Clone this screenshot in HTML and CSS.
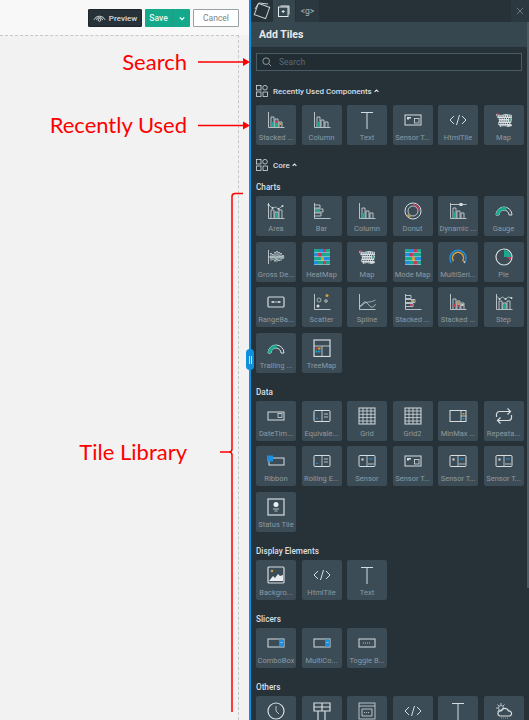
FILE: index.html
```html
<!DOCTYPE html>
<html lang="en">

<head>
    <meta charset="UTF-8">
    <meta name="viewport" content="width=device-width, initial-scale=1.0">
    <title>Add Tiles</title>
    <link rel="stylesheet" href="styles.css">
</head>

<body>

    <svg class="sprites" width="0" height="0">
        <defs>
            <!-- shared chart axis -->
            <path id="axis" d="M1.5 1v15.5H17.5" />

            <symbol id="i-stacked" viewBox="0 0 18 18">
                <use href="#axis" class="ln" />
                <path class="ln" d="M4 16V6h3v10M8 16V8h3v8M12 16v-5h3v5" />
                <rect x="4.5" y="11" width="2" height="5" class="teal" />
                <rect x="8.5" y="12" width="2" height="4" class="teal" />
                <rect x="8.5" y="9.5" width="2" height="2.5" class="red" />
                <rect x="12.5" y="12" width="2" height="2" class="gold" />
            </symbol>
            <symbol id="i-column" viewBox="0 0 18 18">
                <use href="#axis" class="ln" />
                <path class="ln" d="M4 16V6h3v10M8 16V9h3v7M12 16v-5h3v5" />
                <rect x="4.5" y="11" width="2" height="5" class="teal" />
            </symbol>
            <symbol id="i-text" viewBox="0 0 18 18">
                <path class="ln-b" d="M3 1.5h12M9 1.5V18" />
            </symbol>
            <symbol id="i-sensort" viewBox="0 0 18 18">
                <rect x="1" y="4" width="16" height="10" class="ln-b" />
                <path class="fill-l" d="M3 6h4v1.5H5v1H3z" />
                <rect x="10.5" y="7.5" width="4.5" height="4.5" class="ln" />
            </symbol>
            <symbol id="i-html" viewBox="0 0 18 18">
                <path class="ln-b" d="M5 5L1 9l4 4M13 5l4 4-4 4M10.5 4l-3 10" />
            </symbol>
            <symbol id="i-map" viewBox="0 0 18 18">
                <path class="fill-l" d="M1 3l5 1 5-1 6 1v4l-1 4 1 3-4 1-4-1-4 1-2-3 1-4-2-3z" />
                <path class="ln-hole" d="M2 5h15M1 7.500h16M3 10h13M2 12.500h15M4 15h9" />
                <circle cx="3" cy="3" r="1" class="red" />
                <circle cx="15" cy="9" r="1" class="teal" />
            </symbol>
            <symbol id="i-area" viewBox="0 0 18 18">
                <use href="#axis" class="ln" />
                <path class="ln" d="M4 16V8h3v8M8 16v-6h3v6M12 16v-8h3v8" />
                <rect x="8.5" y="11" width="2" height="5" class="teal" />
                <path class="ln-t" d="M1.5 3l4 3 3-1 3 2 4-3" />
                <circle cx="1.5" cy="3" r="1" class="fill-l" />
                <circle cx="5.5" cy="6" r="1" class="fill-l" />
                <circle cx="11.5" cy="7" r="1" class="fill-l" />
                <circle cx="15.5" cy="4" r="1" class="fill-l" />
            </symbol>
            <symbol id="i-bar" viewBox="0 0 18 18">
                <use href="#axis" class="ln" />
                <path class="ln" d="M1.5 3H7v3H1.5M1.5 7H10v3H1.5M1.5 11H8v3H1.5" />
                <rect x="2" y="7.5" width="5" height="2" class="teal" />
            </symbol>
            <symbol id="i-donut" viewBox="0 0 18 18">
                <circle cx="9" cy="9" r="8" class="ln-b" />
                <circle cx="9" cy="9" r="5" class="ln" />
                <path class="ln-r" d="M9 2.5a6.500 6.500 0 0 1 6.5 6.5" />
                <path class="ln-g" d="M3.5 12.5a6.500 6.500 0 0 0 3 2.5" />
            </symbol>
            <symbol id="i-dynamic" viewBox="0 0 18 18">
                <use href="#axis" class="ln" />
                <path class="ln" d="M4 16V6h3v10M8 16V9h3v7M12 16v-5h3v5" />
                <rect x="4.5" y="10" width="2" height="6" class="teal" />
                <path class="ln" d="M1.5 2.5H17.5" />
                <rect x="10.5" y="1" width="3" height="3" class="fill-l" />
            </symbol>
            <symbol id="i-gauge" viewBox="0 0 18 18">
                <path class="ln-b" d="M1 13a8 8 0 0 1 16 0h-3a5 5 0 0 0-10 0z" />
                <path class="teal" d="M1 13a8 8 0 0 1 11-7.400l-1 2.800a5 5 0 0 0-7 4.600z" />
            </symbol>
            <symbol id="i-gross" viewBox="0 0 18 18">
                <path class="ln" d="M1.5 2v14M1 9h16.5" />
                <path class="ln-d" d="M4 5v8M6 6v6M8 4v10M10 3v11M12 4v9M14 5v8M16 7v4" />
                <path class="ln-t" d="M3 10l3-2 3 3 4-3 3 1" />
            </symbol>
            <symbol id="i-heatmap" viewBox="0 0 18 18">
                <rect x="1" y="1" width="16" height="16" class="fill-l" />
                <rect x="1" y="1" width="5" height="3.5" class="teal" />
                <rect x="6" y="1" width="4" height="3.5" class="blue" />
                <rect x="10" y="1" width="3" height="3.5" class="red" />
                <rect x="13" y="1" width="4" height="3.5" class="teal" />
                <rect x="1" y="5" width="4" height="3.5" class="blue" />
                <rect x="5" y="5" width="4" height="3.5" class="red" />
                <rect x="9" y="5" width="8" height="3.5" class="teal" />
                <rect x="1" y="9" width="7" height="3.5" class="teal" />
                <rect x="8" y="9" width="3" height="3.5" class="gold" />
                <rect x="11" y="9" width="6" height="3.5" class="blue" />
                <rect x="1" y="13" width="4" height="3.5" class="blue" />
                <rect x="5" y="13" width="5" height="3.5" class="teal" />
                <rect x="10" y="13" width="3" height="3.5" class="red" />
                <rect x="13" y="13" width="4" height="3.5" class="teal" />
            </symbol>
            <symbol id="i-multi" viewBox="0 0 18 18">
                <path class="ln-bl" d="M2.5 15a8 8 0 1 1 13 0" />
                <path class="ln-go" d="M4.5 13a5.500 5.500 0 1 1 9 0" />
                <path class="ln-w" d="M15.5 15l-.5-2" />
            </symbol>
            <symbol id="i-pie" viewBox="0 0 18 18">
                <circle cx="9" cy="9" r="8" class="ln-w" />
                <path class="teal" d="M9 2a7 7 0 0 1 7 7H9z" />
                <path class="red" d="M12 9h4a7 7 0 0 1-1 3.500z" />
            </symbol>
            <symbol id="i-range" viewBox="0 0 18 18">
                <rect x="1" y="4" width="16" height="10" rx="1" class="ln-w" />
                <path class="ln" d="M4 9h10" />
                <circle cx="6" cy="9" r="1" class="fill-l" />
                <circle cx="12" cy="9" r="1" class="fill-l" />
            </symbol>
            <symbol id="i-scatter" viewBox="0 0 18 18">
                <use href="#axis" class="ln" />
                <circle cx="14" cy="2.5" r="1.5" class="gold" />
                <circle cx="6" cy="7" r="2" class="ln-t" />
                <circle cx="13" cy="8" r="1.3" class="ln" />
                <circle cx="5" cy="13" r="1.5" class="fill-l" />
            </symbol>
            <symbol id="i-spline" viewBox="0 0 18 18">
                <use href="#axis" class="ln" />
                <path class="ln-t" d="M1.5 13c4-1 5-4 9-4s4-1 7-2" />
                <path class="ln" d="M1.5 14c3 0 3-6 6-5s4 6 7 5 2-2 3-3" />
            </symbol>
            <symbol id="i-stackedbar" viewBox="0 0 18 18">
                <use href="#axis" class="ln" />
                <path class="ln" d="M1.5 2.5H7v3H1.5M1.5 6.5H11v3H1.5M1.5 10.5H9v3H1.5" />
                <rect x="7" y="7" width="3" height="2" class="gold" />
                <rect x="6" y="11" width="2.5" height="2" class="red" />
            </symbol>
            <symbol id="i-stackedc2" viewBox="0 0 18 18">
                <use href="#axis" class="ln" />
                <path class="ln" d="M4 16V6h3v10M8 16V8h3v8M12 16v-6h3v6" />
                <rect x="4.5" y="11" width="2" height="3" class="red" />
                <rect x="8.5" y="9" width="2" height="3" class="gold" />
                <rect x="8.5" y="12" width="2" height="2" class="red" />
                <rect x="12.5" y="11" width="2" height="2" class="fill-l" />
            </symbol>
            <symbol id="i-step" viewBox="0 0 18 18">
                <use href="#axis" class="ln" />
                <path class="ln" d="M4 16V8h3v8M8 16v-6h3v6M12 16V8h3v8" />
                <rect x="8.5" y="11" width="2" height="5" class="teal" />
                <path class="ln-t" d="M1.5 3l3 3 3-2 3 2 3-2 3 1" />
                <circle cx="4.5" cy="6" r="1" class="fill-l" />
                <circle cx="10.5" cy="6" r="1" class="fill-l" />
                <circle cx="16.5" cy="5" r="1" class="fill-l" />
            </symbol>
            <symbol id="i-trailing" viewBox="0 0 18 18">
                <path class="ln-b" d="M1 14a8 8 0 0 1 16 0h-3a5 5 0 0 0-10 0z" />
                <path class="teal" d="M1 14a8 8 0 0 1 9-7.900l-.5 3a5 5 0 0 0-5.500 4.900z" />
            </symbol>
            <symbol id="i-treemap" viewBox="0 0 18 18">
                <rect x="1" y="1" width="16" height="16.5" class="ln-w" />
                <path class="ln" d="M1 7h16M9 7v10.5" />
                <rect x="2.5" y="8.5" width="2" height="2" class="red" />
                <rect x="5" y="8.5" width="2.5" height="2" class="gold" />
                <rect x="2.5" y="11.5" width="2" height="2" class="teal" />
                <rect x="5" y="11.5" width="2.5" height="2" class="blue" />
            </symbol>
            <symbol id="i-datetime" viewBox="0 0 18 18">
                <rect x="1" y="5" width="16" height="8" class="ln-b" />
                <rect x="11" y="6.5" width="4" height="4" class="ln" />
            </symbol>
            <symbol id="i-equiv" viewBox="0 0 18 18">
                <rect x="1" y="3.5" width="16" height="11" rx="1" class="ln-b" />
                <path class="ln" d="M9 3.5v11M11 7h4M11 10h4" />
                <rect x="3" y="11" width="2" height="1" class="blue" />
            </symbol>
            <symbol id="i-grid" viewBox="0 0 18 18">
                <rect x="1" y="1" width="16" height="16" class="ln-b" />
                <path class="ln" d="M1 4h16M1 7.300h16M1 10.600h16M1 14h16M5 1v16M9 1v16M13 1v16" />
            </symbol>
            <symbol id="i-minmax" viewBox="0 0 18 18">
                <rect x="1" y="3.5" width="16" height="11" class="ln-b" />
                <path class="ln" d="M12 3.5v11M12 9h5" />
                <rect x="13.5" y="6" width="2" height="1.5" class="gold" />
                <rect x="13.5" y="11" width="2" height="1.5" class="blue" />
            </symbol>
            <symbol id="i-repeat" viewBox="0 0 18 18">
                <path class="ln-w" d="M1.5 10V7.500a3 3 0 0 1 3-3H15M12.500 1.500L15.500 4.500l-3 3M16.500 8v2.500a3 3 0 0 1-3 3H3M5.500 16.500L2.500 13.500l3-3" />
            </symbol>
            <symbol id="i-ribbon" viewBox="0 0 18 18">
                <rect x="2" y="6" width="15" height="7" class="ln-b" />
                <rect x="0" y="3.5" width="6" height="6" class="blue" />
            </symbol>
            <symbol id="i-sensor" viewBox="0 0 18 18">
                <rect x="1" y="3.5" width="16" height="11" rx="1" class="ln-b" />
                <path class="ln" d="M9 3.5v11M10 12h6" />
                <rect x="3.5" y="6.5" width="2" height="2" class="fill-l" />
                <rect x="11" y="6.5" width="4" height="1" class="blue" />
            </symbol>
            <symbol id="i-status" viewBox="0 0 18 18">
                <rect x="1" y="1" width="16" height="16" class="ln-w" />
                <circle cx="9" cy="6.5" r="2.5" class="fill-w" />
                <path class="ln" d="M6 11h6M7.500 13h3" />
            </symbol>
            <symbol id="i-background" viewBox="0 0 18 18">
                <rect x="1" y="1" width="16" height="16" rx="1" class="ln-w" />
                <circle cx="5" cy="5" r="1.3" class="gold" />
                <path class="fill-w" d="M2 15l4-5 2 2 3-4 2 2 3-1v6z" />
            </symbol>
            <symbol id="i-combo" viewBox="0 0 18 18">
                <rect x="1" y="5" width="16" height="8" class="ln-b" />
                <rect x="12" y="5.5" width="5" height="7" class="blue" />
                <path class="ln" d="M13.500 8l1 1 1-1" />
            </symbol>
            <symbol id="i-toggle" viewBox="0 0 18 18">
                <rect x="1" y="5" width="16" height="8" class="ln-b" />
                <path class="ln dots" d="M5 9h8" />
            </symbol>
            <symbol id="i-clock" viewBox="0 0 18 18">
                <circle cx="9" cy="9" r="8" class="ln-w" />
                <path class="ln" d="M9 4v5l3 3" />
            </symbol>
            <symbol id="i-layout" viewBox="0 0 18 18">
                <path class="ln-w" d="M1 1h16v8H1zM9 1v8M1 5h16M5 9v9M12 9v9" />
            </symbol>
            <symbol id="i-iframe" viewBox="0 0 18 18">
                <rect x="1" y="1" width="16" height="16" class="ln" />
                <path class="ln" d="M1 4h16M4 7h10v7H4z" />
                <path class="ln dots" d="M6 10.500h6" />
            </symbol>
            <symbol id="i-weather" viewBox="0 0 18 18">
                <path class="ln" d="M6 1v2M1 6h2M2.500 2.500l1.500 1.500M9.500 2.500L8 4M2.500 9.500L4 8" />
                <circle cx="6" cy="6" r="2.5" class="ln" />
                <path class="ln-w" d="M5 14a2.500 2.500 0 0 1 1-5 4 4 0 0 1 7.500 0 2.500 2.500 0 0 1 1 5z" />
                <path class="ln-bl dots" d="M6 16h8" />
            </symbol>
            <symbol id="i-blocks" viewBox="0 0 12 12">
                <rect x="0.5" y="0.5" width="4.500" height="4.500" class="ln" />
                <circle cx="9" cy="2.7" r="2.3" class="ln" />
                <rect x="0.5" y="7" width="4.500" height="4.500" class="ln" />
                <rect x="7" y="7" width="4.500" height="4.500" class="ln" />
            </symbol>
        </defs>
    </svg>

    <div class="canvas">
        <div class="toolbar">
            <button class="btn btn-preview">
                <svg class="btn-icon" viewBox="0 0 14 10">
                    <path d="M1 7a6.500 6.500 0 0 1 12 0M3.500 7a3.700 3.700 0 0 1 7 0" />
                    <circle cx="7" cy="7" r="1.5" />
                </svg>
                Preview
            </button>
            <div class="btn-save">
                <span class="save-main">Save</span>
                <span class="save-more">
                    <svg class="save-chevron" viewBox="0 0 8 6"><path d="M1 1.500l3 3 3-3" /></svg>
                </span>
            </div>
            <button class="btn btn-cancel">Cancel</button>
        </div>
        <div class="stage"></div>
    </div>

    <div class="panel">
        <div class="tabs">
            <div class="tab tab-cube">
                <svg class="cube" viewBox="0 0 18 18">
                    <rect x="3" y="3" width="12" height="12" transform="rotate(20 9 9)" />
                    <path d="M5 2L2 7M15 2L6 1" />
                </svg>
            </div>
            <div class="tab tab-active">
                <svg class="tab-add" viewBox="0 0 12 12">
                    <rect x="0.5" y="2" width="9.500" height="9.500" />
                    <path d="M2.500 1h8.500v8.500M5.200 5v3M3.700 6.500h3" />
                </svg>
            </div>
            <div class="tab tab-g">&lt;g&gt;</div>
            <div class="tab-close">
                <svg class="close-x" viewBox="0 0 10 10"><path d="M1 1l8 8M9 1l-8 8" /></svg>
            </div>
        </div>

        <div class="panel-title">Add Tiles</div>

        <div class="panel-body">
            <div class="search">
                <svg class="search-icon" viewBox="0 0 12 12">
                    <circle cx="5" cy="5" r="4" />
                    <path d="M8 8l3 3" />
                </svg>
                <span class="search-text">Search</span>
            </div>

            <div class="section-head head-recent">
                <svg class="blocks"><use href="#i-blocks" /></svg>
                <span>Recently Used Components</span>
                <svg class="caret" viewBox="0 0 8 6"><path d="M1 4.500l3-3 3 3" /></svg>
            </div>
            <div class="tiles">
                <div class="tile"><svg class="icon"><use href="#i-stacked" /></svg><span class="tile-label">Stacked ...</span></div>
                <div class="tile"><svg class="icon"><use href="#i-column" /></svg><span class="tile-label">Column</span></div>
                <div class="tile"><svg class="icon"><use href="#i-text" /></svg><span class="tile-label">Text</span></div>
                <div class="tile"><svg class="icon"><use href="#i-sensort" /></svg><span class="tile-label">Sensor T...</span></div>
                <div class="tile"><svg class="icon"><use href="#i-html" /></svg><span class="tile-label">HtmlTile</span></div>
                <div class="tile"><svg class="icon"><use href="#i-map" /></svg><span class="tile-label">Map</span></div>
            </div>

            <div class="section-head head-core">
                <svg class="blocks"><use href="#i-blocks" /></svg>
                <span>Core</span>
                <svg class="caret" viewBox="0 0 8 6"><path d="M1 4.500l3-3 3 3" /></svg>
            </div>

            <div class="group-title group-first">Charts</div>
            <div class="tiles">
                <div class="tile"><svg class="icon"><use href="#i-area" /></svg><span class="tile-label">Area</span></div>
                <div class="tile"><svg class="icon"><use href="#i-bar" /></svg><span class="tile-label">Bar</span></div>
                <div class="tile"><svg class="icon"><use href="#i-column" /></svg><span class="tile-label">Column</span></div>
                <div class="tile"><svg class="icon"><use href="#i-donut" /></svg><span class="tile-label">Donut</span></div>
                <div class="tile"><svg class="icon"><use href="#i-dynamic" /></svg><span class="tile-label">Dynamic ...</span></div>
                <div class="tile"><svg class="icon"><use href="#i-gauge" /></svg><span class="tile-label">Gauge</span></div>
                <div class="tile"><svg class="icon"><use href="#i-gross" /></svg><span class="tile-label">Gross De...</span></div>
                <div class="tile"><svg class="icon"><use href="#i-heatmap" /></svg><span class="tile-label">HeatMap</span></div>
                <div class="tile"><svg class="icon"><use href="#i-map" /></svg><span class="tile-label">Map</span></div>
                <div class="tile"><svg class="icon"><use href="#i-heatmap" /></svg><span class="tile-label">Mode Map</span></div>
                <div class="tile"><svg class="icon"><use href="#i-multi" /></svg><span class="tile-label">MultiSeri...</span></div>
                <div class="tile"><svg class="icon"><use href="#i-pie" /></svg><span class="tile-label">Pie</span></div>
                <div class="tile"><svg class="icon"><use href="#i-range" /></svg><span class="tile-label">RangeBa...</span></div>
                <div class="tile"><svg class="icon"><use href="#i-scatter" /></svg><span class="tile-label">Scatter</span></div>
                <div class="tile"><svg class="icon"><use href="#i-spline" /></svg><span class="tile-label">Spline</span></div>
                <div class="tile"><svg class="icon"><use href="#i-stackedbar" /></svg><span class="tile-label">Stacked ...</span></div>
                <div class="tile"><svg class="icon"><use href="#i-stackedc2" /></svg><span class="tile-label">Stacked ...</span></div>
                <div class="tile"><svg class="icon"><use href="#i-step" /></svg><span class="tile-label">Step</span></div>
                <div class="tile"><svg class="icon"><use href="#i-trailing" /></svg><span class="tile-label">Trailing ...</span></div>
                <div class="tile"><svg class="icon"><use href="#i-treemap" /></svg><span class="tile-label">TreeMap</span></div>
            </div>

            <div class="group-title">Data</div>
            <div class="tiles">
                <div class="tile"><svg class="icon"><use href="#i-datetime" /></svg><span class="tile-label">DateTim...</span></div>
                <div class="tile"><svg class="icon"><use href="#i-equiv" /></svg><span class="tile-label">Equivale...</span></div>
                <div class="tile"><svg class="icon"><use href="#i-grid" /></svg><span class="tile-label">Grid</span></div>
                <div class="tile"><svg class="icon"><use href="#i-grid" /></svg><span class="tile-label">Grid2</span></div>
                <div class="tile"><svg class="icon"><use href="#i-minmax" /></svg><span class="tile-label">MinMax ...</span></div>
                <div class="tile"><svg class="icon"><use href="#i-repeat" /></svg><span class="tile-label">Repeata...</span></div>
                <div class="tile"><svg class="icon"><use href="#i-ribbon" /></svg><span class="tile-label">Ribbon</span></div>
                <div class="tile"><svg class="icon"><use href="#i-equiv" /></svg><span class="tile-label">Rolling E...</span></div>
                <div class="tile"><svg class="icon"><use href="#i-sensor" /></svg><span class="tile-label">Sensor</span></div>
                <div class="tile"><svg class="icon"><use href="#i-sensort" /></svg><span class="tile-label">Sensor T...</span></div>
                <div class="tile"><svg class="icon"><use href="#i-sensor" /></svg><span class="tile-label">Sensor T...</span></div>
                <div class="tile"><svg class="icon"><use href="#i-sensor" /></svg><span class="tile-label">Sensor T...</span></div>
                <div class="tile"><svg class="icon"><use href="#i-status" /></svg><span class="tile-label">Status Tile</span></div>
            </div>

            <div class="group-title">Display Elements</div>
            <div class="tiles">
                <div class="tile"><svg class="icon"><use href="#i-background" /></svg><span class="tile-label">Backgro...</span></div>
                <div class="tile"><svg class="icon"><use href="#i-html" /></svg><span class="tile-label">HtmlTile</span></div>
                <div class="tile"><svg class="icon"><use href="#i-text" /></svg><span class="tile-label">Text</span></div>
            </div>

            <div class="group-title">Slicers</div>
            <div class="tiles">
                <div class="tile"><svg class="icon"><use href="#i-combo" /></svg><span class="tile-label">ComboBox</span></div>
                <div class="tile"><svg class="icon"><use href="#i-combo" /></svg><span class="tile-label">MultiCo...</span></div>
                <div class="tile"><svg class="icon"><use href="#i-toggle" /></svg><span class="tile-label">Toggle B...</span></div>
            </div>

            <div class="group-title">Others</div>
            <div class="tiles">
                <div class="tile"><svg class="icon"><use href="#i-clock" /></svg></div>
                <div class="tile"><svg class="icon"><use href="#i-layout" /></svg></div>
                <div class="tile"><svg class="icon"><use href="#i-iframe" /></svg></div>
                <div class="tile"><svg class="icon"><use href="#i-html" /></svg></div>
                <div class="tile"><svg class="icon"><use href="#i-text" /></svg></div>
                <div class="tile"><svg class="icon"><use href="#i-weather" /></svg></div>
            </div>
        </div>
        <div class="scroll-thumb"></div>
    </div>

    <!-- drag handle on the panel edge -->
    <div class="handle"><i></i><i></i></div>

    <!-- red callouts on top of the screenshot -->
    <div class="note note-search">Search</div>
    <div class="note note-recent">Recently Used</div>
    <div class="note note-library">Tile Library</div>
    <svg class="marks" viewBox="0 0 529 720">
        <path class="mark" d="M198 62H245M220 452H229" />
        <path class="mark-head" d="M250 62l-7-4v8z" />
        <path class="mark" d="M198 125.500H245" />
        <path class="mark-head" d="M250 125.500l-7-4v8z" />
        <path class="mark" d="M243 193.500h-8q-3 0-3 3V449q0 3-3 3q3 0 3 3V712" />
    </svg>

</body>

</html>
```

FILE: styles.css
```css
* {
    box-sizing: border-box;
}

body {
    display: flex;
    width: 529px;
    height: 720px;
    margin: 0;
    overflow: hidden;
    font-family: Roboto, "Liberation Sans", sans-serif;
    background-color: #f2f2f2;
    position: relative;
}

.sprites {
    position: absolute;
}

/* left side */
.canvas {
    width: 249px;
    flex-shrink: 0;
    display: flex;
    flex-direction: column;
}

.toolbar {
    height: 35px;
    display: flex;
    align-items: flex-start;
    justify-content: flex-end;
    gap: 3px;
    padding: 9px 10px 0 0;
    background-color: #f8f8f8;
}

.btn {
    height: 18px;
    padding: 0;
    font-family: inherit;
    font-size: 8px;
    font-weight: 500;
    border-radius: 1px;
    display: flex;
    align-items: center;
    justify-content: center;
}

.btn-preview {
    width: 54px;
    gap: 3px;
    background-color: #263238;
    border: 1px solid #1c262b;
    color: #d5dde0;
}

.btn-icon {
    width: 13px;
    height: 10px;
    fill: none;
    stroke: #d5dde0;
    stroke-width: 1;
}

.btn-save {
    width: 45px;
    height: 18px;
    display: flex;
    background-color: #15a98c;
    border-radius: 1px;
    color: #e6f6f2;
    font-size: 8.5px;
    font-weight: 500;
}

.save-main {
    flex: 1;
    display: flex;
    align-items: center;
    justify-content: center;
    border-right: 1px solid #1f9c84;
}

.save-more {
    width: 17px;
    display: flex;
    align-items: center;
    justify-content: center;
}

.save-chevron {
    width: 6px;
    height: 5px;
    fill: none;
    stroke: #ffffff;
    stroke-width: 1.6;
}

.btn-cancel {
    width: 46px;
    background-color: #ffffff;
    border: 1px solid #9aa1a5;
    color: #7b8388;
    font-size: 8.5px;
    font-weight: 400;
}

.stage {
    flex: 1;
    margin-right: 10px;
    border-top: 1px dashed #c3c8cc;
    border-right: 1px dashed #c3c8cc;
}

/* right side */
.panel {
    width: 280px;
    flex-shrink: 0;
    position: relative;
    background-color: #263238;
    border-left: 2px solid #0f8fdc;
}

.tabs {
    height: 22px;
    display: flex;
    align-items: stretch;
}

.tab {
    display: flex;
    align-items: center;
    justify-content: center;
}

.tab-cube {
    width: 22px;
}

.cube {
    width: 18px;
    height: 18px;
    fill: none;
    stroke: #c9d1d5;
    stroke-width: 1;
}

.tab-active {
    width: 22px;
    background-color: #37474f;
}

.tab-add {
    width: 12px;
    height: 12px;
    fill: none;
    stroke: #e3e8ea;
    stroke-width: 1;
}

.tab-g {
    width: 23px;
    margin-left: 1px;
    font-size: 8.5px;
    color: #aeb8bd;
    background-color: #2b383f;
}

.tab-close {
    width: 18px;
    margin-left: auto;
    display: flex;
    align-items: center;
    justify-content: center;
    background-color: #2b383f;
}

.close-x {
    width: 8px;
    height: 8px;
    fill: none;
    stroke: #7e8b92;
    stroke-width: 1;
}

.panel-title {
    height: 25px;
    padding-left: 8px;
    display: flex;
    align-items: center;
    font-size: 10.5px;
    font-weight: 700;
    color: #e6ebed;
    background-color: #37474f;
}

.panel-body {
    padding: 6px 0 0 5px;
}

.search {
    width: 266px;
    height: 18px;
    display: flex;
    align-items: center;
    gap: 7px;
    padding-left: 5px;
    background-color: #222d33;
    border: 1px solid #4a5c66;
}

.search-icon {
    width: 10px;
    height: 10px;
    fill: none;
    stroke: #a4afb5;
    stroke-width: 1;
}

.search-text {
    font-size: 8.5px;
    color: #5d6b73;
}

.section-head {
    height: 16px;
    display: flex;
    align-items: center;
    font-size: 8px;
    font-weight: 500;
    color: #d9dfe2;
}

.head-recent {
    margin: 12px 0 6px;
}

.head-core {
    margin: 12px 0 8px;
}

.blocks {
    width: 12px;
    height: 12px;
    margin-right: 5px;
}

.caret {
    width: 5px;
    height: 4px;
    margin-left: 2px;
    fill: none;
    stroke: #e6ebed;
    stroke-width: 1.8;
}

.group-title {
    height: 12px;
    margin: 13px 0 3px;
    font-size: 8.2px;
    font-weight: 500;
    line-height: 12px;
    color: #d9dfe2;
}

.group-first {
    margin-top: 0;
}

.tiles {
    display: grid;
    grid-template-columns: repeat(6, 40px);
    gap: 5.5px;
}

.tile {
    height: 40px;
    display: flex;
    flex-direction: column;
    align-items: center;
    padding-top: 6px;
    background-color: #3c4c56;
    border-radius: 2px;
}

.icon {
    width: 18px;
    height: 18px;
    flex-shrink: 0;
    overflow: visible;
}

.tile-label {
    margin-top: 3px;
    font-size: 7.5px;
    line-height: 11px;
    white-space: nowrap;
    color: #8d9aa2;
}

.scroll-thumb {
    position: absolute;
    top: 22px;
    right: 0;
    width: 2px;
    height: 566px;
    background-color: #4c5a62;
}

/* icon strokes, the symbols pick these up */
.ln,
.ln-b,
.ln-w,
.ln-t,
.ln-d,
.ln-r,
.ln-g,
.ln-bl,
.ln-go,
.ln-hole {
    fill: none;
    stroke: #d5dde0;
    stroke-width: 0.8;
}

.ln-b {
    stroke-width: 1;
}

.ln-w {
    stroke-width: 1.2;
}

.ln-t {
    stroke: #a9cfc8;
}

.ln-d {
    stroke-dasharray: 1 0.6;
    stroke-width: 1.5;
}

.ln-r {
    stroke: #c23b5a;
    stroke-width: 1.5;
}

.ln-g {
    stroke: #c9a13d;
    stroke-width: 1.5;
}

.ln-bl {
    stroke: #1d8fe0;
    stroke-width: 1.5;
}

.ln-go {
    stroke: #d9a23a;
    stroke-width: 1.5;
}

.ln-hole {
    stroke: #3c4c56;
    stroke-width: 1.2;
    stroke-dasharray: 1.2 1;
}

.dots {
    stroke-dasharray: 1 1;
}

.fill-l {
    fill: #d5dde0;
}

.fill-w {
    fill: #e9edef;
}

.teal {
    fill: #1aa88f;
    stroke: none;
}

.red {
    fill: #c23b5a;
    stroke: none;
}

.gold {
    fill: #c9a13d;
    stroke: none;
}

.blue {
    fill: #1d8fe0;
    stroke: none;
}

/* overlays */
.handle {
    position: absolute;
    left: 246px;
    top: 349px;
    width: 8px;
    height: 21px;
    display: flex;
    align-items: center;
    justify-content: center;
    gap: 1px;
    background-color: #0f8fdc;
    border-radius: 4px;
}

.handle i {
    width: 1px;
    height: 8px;
    background-color: #b9dff7;
}

.note {
    position: absolute;
    right: 342px;
    font-family: Lato, sans-serif;
    font-size: 22px;
    line-height: 30px;
    white-space: nowrap;
    color: #ff0000;
}

.note-search {
    top: 47px;
}

.note-recent {
    top: 110px;
}

.note-library {
    top: 437px;
}

.marks {
    position: absolute;
    left: 0;
    top: 0;
    width: 529px;
    height: 720px;
    pointer-events: none;
}

.mark {
    fill: none;
    stroke: #ff0000;
    stroke-width: 1.5;
}

.mark-head {
    fill: #ff0000;
}
```
